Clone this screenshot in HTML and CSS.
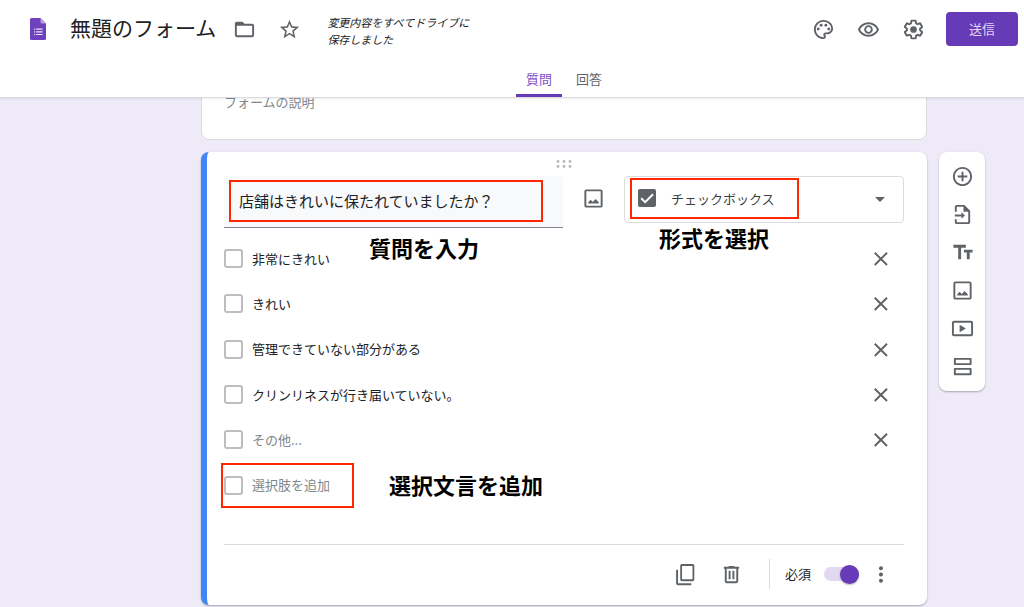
FILE: index.html
```html
<!DOCTYPE html>
<html lang="ja">
<head>
<meta charset="utf-8">
<meta name="viewport" content="width=device-width, initial-scale=1">
<title>無題のフォーム</title>
<link rel="stylesheet" href="styles.css">
</head>
<body>
<svg class="sprite" aria-hidden="true">
  <symbol id="close" viewBox="0 0 24 24"><path d="M6 6l12.800 12.800M18.800 6L6 18.800" fill="none" stroke="currentColor" stroke-width="2"/></symbol>
  <symbol id="image" viewBox="0 0 24 24"><rect x="3.500" y="3.500" width="17" height="17" rx="1" fill="none" stroke="currentColor" stroke-width="2"/><path d="M6.500 17.300v-1.300l2.500-2.600 2.300 2.300 2.900-3.300 3.300 3.600v1.300z"/></symbol>
</svg>

<header class="header">
  <div class="header-bar">
    <svg class="logo" viewBox="0 0 16 22" aria-hidden="true">
      <path d="M1.500 0H10.500L16 5.500V20.500A1.500 1.500 0 0 1 14.500 22H1.500A1.500 1.500 0 0 1 0 20.500V1.500A1.500 1.500 0 0 1 1.500 0z" fill="#6f42bd"/>
      <path d="M10.500 0L16 5.500H12A1.500 1.500 0 0 1 10.500 4z" fill="#b39ddb"/>
      <path d="M4 10.500h1.200v1.200H4zM6.200 10.500H12.500v1.200H6.200zM4 13.200h1.200v1.200H4zM6.200 13.200H12.500v1.200H6.200zM4 15.900h1.200v1.200H4zM6.200 15.900H12.500v1.200H6.200z" fill="#eee6fb"/>
    </svg>
    <h1 class="title">無題のフォーム</h1>
    <div class="icon-group">
      <button class="icon-button" type="button" aria-label="フォルダに移動"><svg viewBox="0 0 24 24"><path d="M20 6h-8l-2-2H4c-1.100 0-2 .9-2 2v12c0 1.100.9 2 2 2h16c1.100 0 2-.9 2-2V8c0-1.100-.9-2-2-2zm0 12H4V8h16v10z"/></svg></button>
      <button class="icon-button" type="button" aria-label="スターを付ける"><svg viewBox="0 0 24 24"><path d="M22 9.240l-7.190-.62L12 2 9.190 8.630 2 9.240l5.460 4.730L5.820 21 12 17.270 18.180 21l-1.630-7.030L22 9.240zM12 15.400l-3.760 2.270 1-4.280-3.320-2.880 4.380-.38L12 6.100l1.710 4.040 4.380.38-3.320 2.880 1 4.280L12 15.400z"/></svg></button>
    </div>
    <p class="saved">変更内容をすべてドライブに<br>保存しました</p>
    <div class="icon-group actions">
      <button class="icon-button" type="button" aria-label="テーマをカスタマイズ"><svg viewBox="0 0 24 24"><path d="M12 22C6.490 22 2 17.510 2 12S6.490 2 12 2s10 4.040 10 9c0 3.310-2.690 6-6 6h-1.770c-.28 0-.5.22-.5.5 0 .12.05.23.13.33.41.47.64 1.060.64 1.670A2.500 2.500 0 0 1 12 22zm0-18c-4.410 0-8 3.590-8 8s3.590 8 8 8c.28 0 .5-.22.5-.5a.54.54 0 0 0-.14-.35c-.41-.46-.63-1.050-.63-1.650a2.500 2.500 0 0 1 2.500-2.500H16c2.210 0 4-1.790 4-4 0-3.860-3.590-7-8-7z"/><circle cx="6.500" cy="11.500" r="1.500"/><circle cx="9.500" cy="7.500" r="1.500"/><circle cx="14.500" cy="7.500" r="1.500"/><circle cx="17.500" cy="11.500" r="1.500"/></svg></button>
      <button class="icon-button" type="button" aria-label="プレビュー"><svg viewBox="0 0 24 24"><path d="M12 6.500c3.790 0 7.170 2.130 8.820 5.500-1.650 3.370-5.020 5.500-8.820 5.500S4.830 15.370 3.180 12C4.830 8.630 8.210 6.500 12 6.500m0-2C7 4.500 2.730 7.610 1 12c1.730 4.390 6 7.500 11 7.500s9.270-3.110 11-7.500c-1.730-4.390-6-7.500-11-7.500zm0 5a2.500 2.500 0 0 1 0 5 2.500 2.500 0 0 1 0-5m0-2c-2.480 0-4.500 2.020-4.500 4.500s2.020 4.500 4.500 4.500 4.500-2.020 4.500-4.500-2.020-4.500-4.500-4.500z"/></svg></button>
      <button class="icon-button" type="button" aria-label="設定"><svg viewBox="0 0 24 24"><path d="M13.850 22.250h-3.700c-.74 0-1.360-.54-1.450-1.270l-.27-1.890c-.27-.14-.53-.29-.79-.46l-1.800.72c-.7.26-1.470-.03-1.810-.65L2.200 15.530c-.35-.66-.2-1.440.36-1.880l1.530-1.190c-.01-.15-.02-.3-.02-.46 0-.15.01-.31.02-.46l-1.520-1.190c-.59-.45-.74-1.260-.37-1.880l1.850-3.190c.34-.62 1.110-.9 1.790-.63l1.810.73c.26-.17.52-.32.78-.46l.27-1.910c.09-.7.71-1.250 1.440-1.250h3.700c.74 0 1.360.54 1.450 1.270l.27 1.890c.27.14.53.29.79.46l1.800-.72c.71-.26 1.480.03 1.820.65l1.840 3.180c.36.66.2 1.440-.36 1.880l-1.520 1.190c.01.15.02.3.02.46s-.01.31-.02.46l1.520 1.190c.56.45.72 1.230.37 1.860l-1.860 3.220c-.34.62-1.110.9-1.800.63l-1.800-.72c-.26.17-.52.32-.78.46l-.27 1.910c-.1.68-.72 1.220-1.460 1.220zm-3.230-2h2.760l.37-2.550.53-.22c.44-.18.88-.44 1.340-.78l.45-.34 2.380.96 1.380-2.400-2.030-1.580.07-.56c.03-.26.06-.51.06-.78s-.03-.53-.06-.78l-.07-.56 2.030-1.580-1.390-2.400-2.390.96-.45-.35c-.42-.32-.87-.58-1.330-.77l-.52-.22-.37-2.550h-2.760l-.37 2.550-.53.21c-.44.19-.88.44-1.340.79l-.45.33-2.380-.95-1.390 2.390 2.030 1.580-.07.56a7 7 0 0 0-.06.79c0 .26.02.53.06.78l.07.56-2.030 1.580 1.380 2.400 2.390-.96.45.35c.43.33.86.58 1.330.77l.53.22.38 2.550z"/><circle cx="12" cy="12" r="3.500"/></svg></button>
    </div>
    <button class="send" type="button">送信</button>
  </div>
  <nav class="tabs">
    <a class="tab tab-active" href="#questions">質問</a>
    <a class="tab" href="#responses">回答</a>
  </nav>
</header>

<main class="main" id="questions">
  <div class="cards">
    <section class="card intro">フォームの説明</section>

    <section class="card question">
      <div class="drag">
        <svg viewBox="0 0 16 8" aria-hidden="true"><circle cx="2" cy="1.500" r="1.400"/><circle cx="8" cy="1.500" r="1.400"/><circle cx="14" cy="1.500" r="1.400"/><circle cx="2" cy="6.500" r="1.400"/><circle cx="8" cy="6.500" r="1.400"/><circle cx="14" cy="6.500" r="1.400"/></svg>
      </div>

      <div class="question-row">
        <div class="question-field">
          <input class="question-input" type="text" aria-label="質問" value="店舗はきれいに保たれていましたか？">
          <span class="frame frame-question"></span>
          <strong class="note note-question">質問を入力</strong>
        </div>
        <button class="icon-button add-image" type="button" aria-label="画像を追加"><svg viewBox="0 0 24 24"><use href="#image"/></svg></button>
        <div class="type-field">
          <select class="type-select" aria-label="質問の形式"><option>チェックボックス</option></select>
          <svg class="type-icon" viewBox="0 0 18 18" aria-hidden="true"><rect width="18" height="18" rx="2"/><path d="M3.200 9.200l4 4L15 5.200" fill="none" stroke="#fff" stroke-width="2"/></svg>
          <svg class="type-arrow" viewBox="0 0 10 5" aria-hidden="true"><path d="M0 0h10L5 5z"/></svg>
          <span class="frame frame-type"></span>
          <strong class="note note-type">形式を選択</strong>
        </div>
      </div>

      <ul class="options">
        <li class="option"><label class="choice"><input class="box" type="checkbox">非常にきれい</label><button class="icon-button" type="button" aria-label="削除"><svg viewBox="0 0 24 24"><use href="#close"/></svg></button></li>
        <li class="option"><label class="choice"><input class="box" type="checkbox">きれい</label><button class="icon-button" type="button" aria-label="削除"><svg viewBox="0 0 24 24"><use href="#close"/></svg></button></li>
        <li class="option"><label class="choice"><input class="box" type="checkbox">管理できていない部分がある</label><button class="icon-button" type="button" aria-label="削除"><svg viewBox="0 0 24 24"><use href="#close"/></svg></button></li>
        <li class="option"><label class="choice"><input class="box" type="checkbox">クリンリネスが行き届いていない。</label><button class="icon-button" type="button" aria-label="削除"><svg viewBox="0 0 24 24"><use href="#close"/></svg></button></li>
        <li class="option"><label class="choice muted"><input class="box" type="checkbox">その他...</label><button class="icon-button" type="button" aria-label="削除"><svg viewBox="0 0 24 24"><use href="#close"/></svg></button></li>
        <li class="option"><label class="choice muted"><input class="box" type="checkbox">選択肢を追加</label><span class="frame frame-add"></span><strong class="note note-add">選択文言を追加</strong></li>
      </ul>

      <div class="card-footer">
        <button class="icon-button" type="button" aria-label="コピーを作成"><svg viewBox="0 0 24 24"><path d="M8.200 1h11.300A1.700 1.700 0 0 1 21.200 2.700v14.600a1.700 1.700 0 0 1-1.700 1.700H8.200a1.700 1.700 0 0 1-1.700-1.700V2.700A1.700 1.700 0 0 1 8.200 1zm.2 2v14h10.900V3zM2.200 7h2v14.200H18v2H4.200a2 2 0 0 1-2-2z"/></svg></button>
        <button class="icon-button" type="button" aria-label="削除"><svg viewBox="0 0 24 24"><path d="M15 4V3H9v1H4v2h1v13c0 1.100.9 2 2 2h10c1.100 0 2-.9 2-2V6h1V4h-5zm2 15H7V6h10v13zM9 8h2v9H9zm4 0h2v9h-2z"/></svg></button>
        <label class="required">必須<input class="switch" type="checkbox" role="switch" checked></label>
        <button class="icon-button" type="button" aria-label="その他のオプション"><svg viewBox="0 0 24 24"><circle cx="12.500" cy="5.500" r="2.100"/><circle cx="12.500" cy="12" r="2.100"/><circle cx="12.500" cy="18.500" r="2.100"/></svg></button>
      </div>
    </section>
  </div>

  <aside class="toolbar">
    <button class="icon-button" type="button" aria-label="質問を追加"><svg viewBox="0 0 24 24"><path d="M13 7h-2v4H7v2h4v4h2v-4h4v-2h-4V7zm-1-5C6.480 2 2 6.480 2 12s4.480 10 10 10 10-4.480 10-10S17.520 2 12 2zm0 18c-4.410 0-8-3.590-8-8s3.590-8 8-8 8 3.590 8 8-3.590 8-8 8z"/></svg></button>
    <button class="icon-button" type="button" aria-label="質問をインポート"><svg viewBox="0 0 24 24"><path d="M14 2H6c-1.100 0-2 .9-2 2v5h2V4h7v5h5v11H6v-3H4v3c0 1.100.9 2 2 2h12c1.100 0 2-.9 2-2V8z"/><path d="M4 12h7V9.500l3.500 3.500-3.500 3.500V14H4z"/></svg></button>
    <button class="icon-button" type="button" aria-label="タイトルと説明を追加"><svg viewBox="0 0 24 24"><path d="M2.500 4v3h5v12h3V7h5V4h-13zm20 5h-9v3h3v7h3v-7h3V9z"/></svg></button>
    <button class="icon-button" type="button" aria-label="画像を追加"><svg viewBox="0 0 24 24"><use href="#image"/></svg></button>
    <button class="icon-button" type="button" aria-label="動画を追加"><svg viewBox="0 0 24 24"><rect x="2" y="5" width="20" height="14" rx="1" fill="none" stroke="currentColor" stroke-width="2"/><path d="M9 8.200v7.600l6.500-3.800z"/></svg></button>
    <button class="icon-button" type="button" aria-label="セクションを追加"><svg viewBox="0 0 24 24"><path d="M4 4h16.500v5.500H4zM4 14.500h16.500V20H4z" fill="none" stroke="currentColor" stroke-width="2" stroke-linejoin="round"/></svg></button>
  </aside>
</main>
</body>
</html>
```

FILE: styles.css
```css
* {
  box-sizing: border-box;
}

body {
  display: flex;
  flex-direction: column;
  min-height: 100vh;
  margin: 0;
  background: #eeeaf8;
  color: #202124;
  font-family: "Noto Sans CJK JP", sans-serif;
  font-size: 13px;
  line-height: 20px;
}

button,
input,
select {
  margin: 0;
  color: inherit;
  font: inherit;
}

.sprite {
  position: absolute;
  width: 0;
  height: 0;
}

.icon-button {
  display: block;
  flex: none;
  width: 23px;
  height: 23px;
  padding: 0;
  border: 0;
  background: none;
  color: #5f6368;
}

.icon-button svg {
  display: block;
  width: 100%;
  height: 100%;
  fill: currentColor;
}

.icon-group {
  display: flex;
  gap: 22px;
}

/* Header */

.header {
  position: relative;
  z-index: 1;
  border-bottom: 1px solid #dadce0;
  background: #fff;
  box-shadow: 0 1px 2px rgba(60, 64, 67, 0.1);
}

.header-bar {
  display: flex;
  align-items: center;
  height: 58px;
  padding: 0 6px 0 30px;
}

.logo {
  flex: none;
  width: 16px;
  height: 22px;
  margin-right: 24px;
}

.title {
  margin: 0 17px 4px 0;
  font-size: 21px;
  font-weight: 400;
  line-height: 32px;
  white-space: nowrap;
}

.saved {
  margin: 4px 0 0 26px;
  font-size: 11px;
  font-style: italic;
  line-height: 17px;
  white-space: nowrap;
}

.actions {
  margin: 0 21px 0 auto;
}

.send {
  flex: none;
  width: 72px;
  height: 34px;
  padding: 0;
  border: 0;
  border-radius: 4px;
  background: #673ab7;
  color: #e3d7f5;
}

.tabs {
  display: flex;
  justify-content: center;
  gap: 4px;
  padding: 4px 0 0 104px;
}

.tab {
  height: 35px;
  padding: 7px 10px 0;
  color: #5f6368;
  text-decoration: none;
}

.tab-active {
  border-bottom: 3px solid #673ab7;
  border-radius: 2px 2px 0 0;
  color: #7e4fc9;
}

/* Content */

.main {
  display: grid;
  flex: 1;
  grid-template-columns: 1fr minmax(0, 726px) 1fr;
  align-items: start;
  padding-left: 104px;
}

.cards {
  display: grid;
  grid-column: 2;
  gap: 12px;
}

.card {
  border-radius: 8px;
  background: #fff;
}

.intro {
  margin-top: -20px;
  padding: 13px 22px 27px;
  border: 1px solid #dadce0;
  color: #80868b;
}

.question {
  padding: 0 23px 0 17px;
  border-left: 6px solid #4285f4;
  box-shadow: 0 1px 2px rgba(60, 64, 67, 0.4);
}

.drag {
  display: flex;
  justify-content: center;
  padding: 8px 0;
}

.drag svg {
  width: 16px;
  height: 8px;
  fill: #b4b6b9;
}

.question-row {
  display: flex;
  align-items: flex-start;
  gap: 19px;
}

.question-field {
  position: relative;
  flex: 339;
}

.question-input {
  display: block;
  width: 100%;
  height: 52px;
  padding: 0 15px 2px;
  border: 0;
  border-bottom: 1px solid #80868b;
  border-radius: 4px 4px 0 0;
  background: #f8f9fa;
  font-size: 15px;
}

.add-image {
  margin-top: 11px;
}

.type-field {
  position: relative;
  flex: 280;
}

.type-select {
  display: block;
  width: 100%;
  height: 47px;
  padding: 0 46px 2px;
  border: 1px solid #dadce0;
  border-radius: 4px;
  appearance: none;
  background: #fff;
  color: #3c4043;
}

.type-icon,
.type-arrow {
  position: absolute;
  fill: #5f6368;
  pointer-events: none;
}

.type-icon {
  top: 13px;
  left: 14px;
  width: 18px;
  height: 18px;
}

.type-arrow {
  top: 21px;
  right: 19px;
  width: 10px;
  height: 5px;
}

.options {
  display: grid;
  grid-auto-rows: 1fr;
  min-height: 272px;
  margin: 8px 0 36px;
  padding: 0;
  list-style: none;
}

.option {
  position: relative;
  display: flex;
  align-items: center;
  justify-content: space-between;
  padding-right: 12px;
}

.choice {
  display: flex;
  align-items: center;
  gap: 9px;
}

.muted {
  color: #80868b;
}

.box {
  width: 19px;
  height: 19px;
  border: 2px solid #bdbdbd;
  border-radius: 3px;
  appearance: none;
}

.card-footer {
  display: flex;
  align-items: center;
  justify-content: flex-end;
  gap: 23px;
  padding: 14px 12px 16px 0;
  border-top: 1px solid #dadce0;
}

.required {
  display: flex;
  align-items: center;
  gap: 13px;
  height: 30px;
  margin: 0 -13px 0 3px;
  padding-left: 15px;
  border-left: 1px solid #dadce0;
}

.switch {
  display: flex;
  align-items: center;
  justify-content: flex-end;
  width: 35px;
  height: 14px;
  border-radius: 7px;
  appearance: none;
  background: #e1d8f1;
}

.switch::before {
  width: 19px;
  height: 19px;
  flex: none;
  border-radius: 50%;
  background: #673ab7;
  box-shadow: 0 1px 2px rgba(0, 0, 0, 0.3);
  content: "";
}

.toolbar {
  display: grid;
  gap: 15px;
  justify-self: start;
  margin: 54px 0 0 12px;
  padding: 13px 11px 13px 12px;
  border-radius: 8px;
  background: #fff;
  box-shadow: 0 1px 2px rgba(60, 64, 67, 0.4);
}

/* Annotations drawn over the form */

.frame {
  position: absolute;
  border: 2px solid #ff2600;
  pointer-events: none;
}

.frame-question {
  inset: 4px 20px 6px 5px;
}

.frame-type {
  top: 2px;
  left: 6px;
  width: 169px;
  height: 41px;
}

.frame-add {
  top: 0;
  left: -3px;
  width: 133px;
  height: 45px;
}

.note {
  position: absolute;
  color: #000;
  font-size: 22px;
  font-weight: 700;
  line-height: 32px;
  white-space: nowrap;
}

.note-question {
  top: 55px;
  left: 145px;
}

.note-type {
  top: 45px;
  left: 35px;
}

.note-add {
  top: 5px;
  left: 165px;
}
```
